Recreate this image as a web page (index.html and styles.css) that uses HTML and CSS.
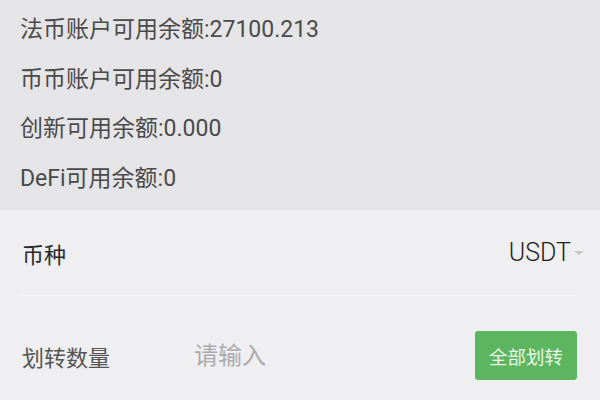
FILE: index.html
```html
<!DOCTYPE html>
<html lang="zh-CN">

<head>
    <meta charset="UTF-8">
    <meta name="viewport" content="width=device-width, initial-scale=1.0">
    <title>资金划转</title>
    <link rel="stylesheet" href="styles.css">
</head>

<body>
    <div class="balances">
        <div class="balance-line">法币账户可用余额:27100.213</div>
        <div class="balance-line">币币账户可用余额:0</div>
        <div class="balance-line">创新可用余额:0.000</div>
        <div class="balance-line">DeFi可用余额:0</div>
    </div>

    <div class="transfer-form">
        <div class="form-row coin-row">
            <span class="form-label">币种</span>
            <div class="coin-select">
                <span class="coin-name">USDT</span>
                <span class="caret"></span>
            </div>
        </div>

        <div class="form-row amount-row">
            <span class="form-label amount-label">划转数量</span>
            <input type="text" class="amount-input" placeholder="请输入">
            <button class="all-button">全部划转</button>
        </div>
    </div>
</body>

</html>
```

FILE: styles.css
```css
:root {
    --top-bg: #e5e5e7;
    --form-bg: #efeef0;
    --line: #f8f8f9;
    --green: #5cb660;
}

body {
    margin: 0;
    width: 600px;
    height: 400px;
    overflow: hidden;
    font-family: Roboto, 'Noto Sans CJK SC', sans-serif;
    background-color: var(--form-bg);
}

.balances {
    background-color: var(--top-bg);
    padding: 5px 20px 6px;
    height: 199px;
}

.balance-line {
    font-size: 23px;
    line-height: 49.5px;
    color: #4a4a4a;
}

.transfer-form {
    padding: 0 24px 0 22px;
}

.form-row {
    display: flex;
    align-items: center;
}

.coin-row {
    height: 85px;
    border-bottom: 1px solid var(--line);
}

.form-label {
    font-size: 22px;
    color: #2a2a2a;
    flex-shrink: 0;
}

.coin-select {
    margin-left: auto;
    display: flex;
    align-items: center;
    gap: 3px;
}

.coin-name {
    font-size: 25px;
    font-weight: 300;
    color: #1e1e1e;
}

.caret {
    width: 0;
    height: 0;
    border-left: 5px solid transparent;
    border-right: 5px solid transparent;
    border-top: 4px solid #c8c8ca;
    margin-right: -8px;
}

.amount-row {
    padding-top: 35px;
}

.amount-label {
    color: #555;
    width: 172px;
}

.amount-input {
    flex: 1;
    min-width: 0;
    border: none;
    outline: none;
    background: transparent;
    font-family: inherit;
    font-size: 24px;
    color: #333;
    padding: 0;
}

.amount-input::placeholder {
    color: #ababad;
}

.all-button {
    flex-shrink: 0;
    width: 102px;
    height: 49px;
    border: none;
    border-radius: 3px;
    background-color: var(--green);
    color: #eaf7ea;
    font-family: inherit;
    font-size: 18.5px;
    padding: 0;
    margin-right: -1px;
    cursor: pointer;
}
```
